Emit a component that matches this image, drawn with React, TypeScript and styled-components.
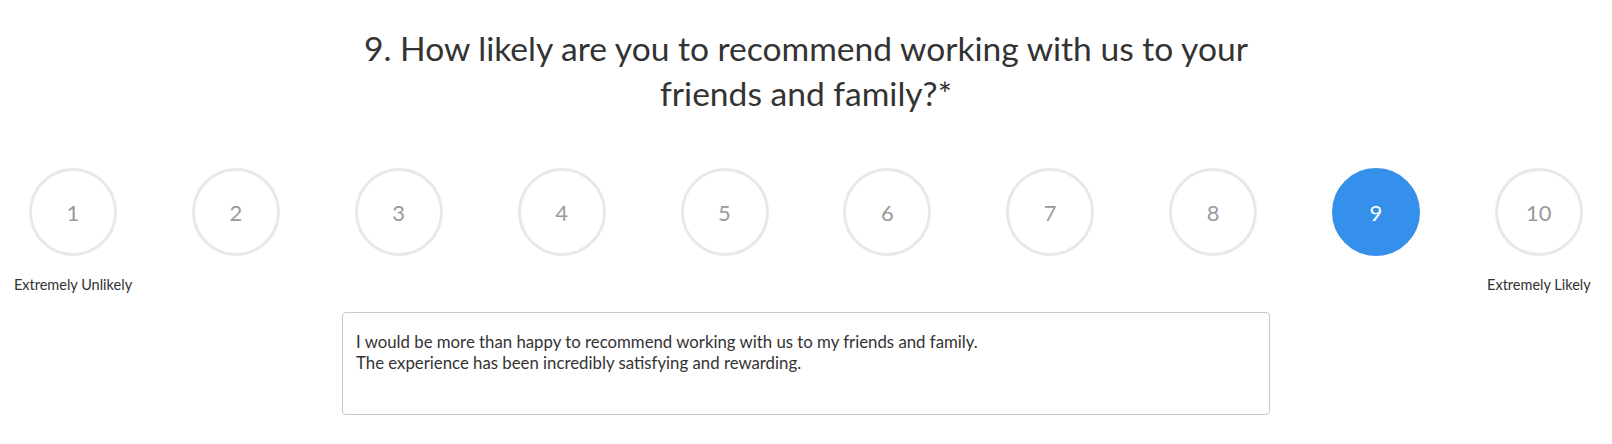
import React from "react";
import styled, { createGlobalStyle } from "styled-components";

const Global = createGlobalStyle`
  html, body { margin: 0; padding: 0; background: #ffffff; }
  body { font-family: "Source Sans Pro", Lato, "Noto Sans", sans-serif; color: #333333; }
`;

const Page = styled.main`
  width: 1612px;
  display: flex;
  flex-direction: column;
  align-items: center;
  padding-top: 26px;
`;

const Title = styled.h2`
  margin: 0;
  width: 900px;
  text-align: center;
  font-weight: 400;
  font-size: 33.6px;
  line-height: 45px;
  color: #333333;
`;

const Scale = styled.div`
  box-sizing: border-box;
  width: 100%;
  padding: 0 29px;
  margin-top: 52px;
  display: flex;
  justify-content: space-between;
`;

const Item = styled.div`
  width: 88px;
  display: flex;
  flex-direction: column;
  align-items: center;
`;

const Circle = styled.button<{ $active?: boolean }>`
  box-sizing: border-box;
  width: 88px;
  height: 88px;
  border-radius: 50%;
  border: 3px solid ${(p) => (p.$active ? "#3490ea" : "#e8e8e8")};
  background: ${(p) => (p.$active ? "#3490ea" : "#ffffff")};
  color: ${(p) => (p.$active ? "#ffffff" : "#9a9a9a")};
  font-family: inherit;
  font-size: 22px;
  padding: 0;
  display: flex;
  align-items: center;
  justify-content: center;
`;

const Label = styled.div`
  margin-top: 19px;
  height: 20px;
  white-space: nowrap;
  font-size: 14.5px;
  line-height: 20px;
  color: #333333;
`;

const Answer = styled.div`
  box-sizing: border-box;
  width: 928px;
  height: 103px;
  margin-top: 17px;
  border: 1px solid #c8c8c8;
  border-radius: 4px;
  padding: 19px 13px;
  font-size: 16.8px;
  line-height: 20.5px;
  color: #333333;
`;

const labels: Record<number, string> = { 1: "Extremely Unlikely", 10: "Extremely Likely" };

export default function App() {
  return (
    <>
      <Global />
      <Page>
        <Title>9. How likely are you to recommend working with us to your friends and family?*</Title>
        <Scale>
          {Array.from({ length: 10 }, (_, i) => i + 1).map((n) => (
            <Item key={n}>
              <Circle $active={n === 9}>{n}</Circle>
              <Label>{labels[n] ?? ""}</Label>
            </Item>
          ))}
        </Scale>
        <Answer>
          I would be more than happy to recommend working with us to my friends and family.
          <br />
          The experience has been incredibly satisfying and rewarding.
        </Answer>
      </Page>
    </>
  );
}
